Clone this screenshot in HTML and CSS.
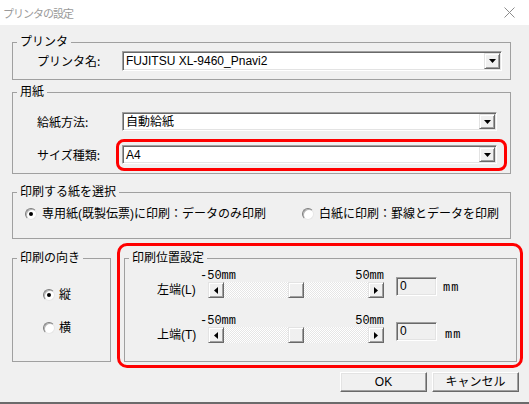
FILE: index.html
```html
<!doctype html>
<html>
<head>
	<meta charset="utf-8" />
	<title>プリンタの設定</title>
	<link rel="stylesheet" href="styles.css">
</head>
<body>
	<div class="titlebar">
		<span class="title">プリンタの設定</span>
		<svg class="close" width="11" height="11" viewBox="0 0 11 11">
			<path d="M0.5 0.5L10.5 10.5M10.5 0.5L0.5 10.5" stroke="#8c8c8c" stroke-width="1" fill="none"/>
		</svg>
	</div>

	<div class="dialog">
		<fieldset class="group g-printer">
			<legend>プリンタ</legend>
			<div class="row">
				<span class="row-label">プリンタ名:</span>
				<div class="combo combo-wide">
					<span class="combo-text">FUJITSU XL-9460_Pnavi2</span>
					<span class="drop"><svg width="7" height="4" viewBox="0 0 7 4"><path d="M0 0H7L3.5 4Z" fill="#000"/></svg></span>
				</div>
			</div>
		</fieldset>

		<fieldset class="group g-paper">
			<legend>用紙</legend>
			<div class="row">
				<span class="row-label">給紙方法:</span>
				<div class="combo">
					<span class="combo-text">自動給紙</span>
					<span class="drop"><svg width="7" height="4" viewBox="0 0 7 4"><path d="M0 0H7L3.5 4Z" fill="#000"/></svg></span>
				</div>
			</div>
			<div class="row row-size">
				<span class="row-label">サイズ種類:</span>
				<div class="mark mark-size">
					<div class="combo">
						<span class="combo-text">A4</span>
						<span class="drop"><svg width="7" height="4" viewBox="0 0 7 4"><path d="M0 0H7L3.5 4Z" fill="#000"/></svg></span>
					</div>
				</div>
			</div>
		</fieldset>

		<fieldset class="group g-select">
			<legend>印刷する紙を選択</legend>
			<div class="options">
				<label class="opt"><span class="radio checked"></span>専用紙(既製伝票)に印刷：データのみ印刷</label>
				<label class="opt opt-blank"><span class="radio"></span>白紙に印刷：罫線とデータを印刷</label>
			</div>
		</fieldset>

		<div class="lower">
			<fieldset class="group g-orient">
				<legend>印刷の向き</legend>
				<div class="orient-list">
					<label class="opt"><span class="radio checked"></span>縦</label>
					<label class="opt opt-landscape"><span class="radio"></span>横</label>
				</div>
			</fieldset>

			<div class="mark mark-pos">
				<fieldset class="group g-pos">
					<legend>印刷位置設定</legend>
					<div class="slider">
						<span class="slider-label">左端(L)</span>
						<div class="track-col">
							<div class="scale"><span>-50mm</span><span>50mm</span></div>
							<div class="scroll">
								<span class="sb-btn"><svg width="4" height="7" viewBox="0 0 4 7"><path d="M4 0V7L0 3.5Z" fill="#000"/></svg></span>
								<span class="sb-track"><span class="sb-thumb"></span></span>
								<span class="sb-btn"><svg width="4" height="7" viewBox="0 0 4 7"><path d="M0 0V7L4 3.5Z" fill="#000"/></svg></span>
							</div>
						</div>
						<span class="edit">0</span>
						<span class="unit">mm</span>
					</div>
					<div class="slider">
						<span class="slider-label">上端(T)</span>
						<div class="track-col">
							<div class="scale"><span>-50mm</span><span>50mm</span></div>
							<div class="scroll">
								<span class="sb-btn"><svg width="4" height="7" viewBox="0 0 4 7"><path d="M4 0V7L0 3.5Z" fill="#000"/></svg></span>
								<span class="sb-track"><span class="sb-thumb"></span></span>
								<span class="sb-btn"><svg width="4" height="7" viewBox="0 0 4 7"><path d="M0 0V7L4 3.5Z" fill="#000"/></svg></span>
							</div>
						</div>
						<span class="edit">0</span>
						<span class="unit unit-low">mm</span>
					</div>
				</fieldset>
			</div>
		</div>

		<div class="buttons">
			<button class="btn">OK</button>
			<button class="btn">キャンセル</button>
		</div>
	</div>
</body>
</html>
```

FILE: styles.css
```css
*
{
	box-sizing: border-box;
}

body
{
	margin: 0;
	width: 529px;
	height: 404px;
	overflow: hidden;
	background: #f0f0f0;
	border-bottom: 2px solid #6b6b6b;
	color: #000;
	font-family: "Liberation Sans", "Noto Sans CJK JP", sans-serif;
	font-size: 12px;
	line-height: 14px;
}

/* window caption */
.titlebar
{
	height: 25px;
	background: #fff;
	display: flex;
	align-items: center;
	justify-content: space-between;
	padding: 0 14px 0 3px;
}

.title
{
	font-family: "Noto Sans CJK JP", sans-serif;
	font-size: 11px;
	letter-spacing: -1px;
	color: #9a9a9a;
}

.close
{
	display: block;
}

.dialog
{
	padding: 10px 0 0 12px;
}

/* group boxes */
.group
{
	margin: 0;
	padding: 0;
	min-width: 0;
	border: 1px solid #a0a0a0;
	width: 499px;
}

.group legend
{
	margin-left: 4px;
	padding: 0 3px;
	line-height: 14px;
	height: 14px;
	white-space: nowrap;
}

.g-printer
{
	padding: 2px 0 8px 0;
}

.g-paper
{
	margin-top: 5px;
	padding: 13px 0 9px 0;
}

.g-select
{
	margin-top: 11px;
	padding: 8px 0 17px 0;
}

.row
{
	display: flex;
	align-items: center;
}

.row-size
{
	margin-top: 14px;
}

.row-label
{
	width: 109px;
	padding-left: 24px;
	font-family: "Noto Sans CJK JP", sans-serif;
}

/* combo boxes */
.combo
{
	display: flex;
	align-items: center;
	justify-content: space-between;
	width: 375px;
	height: 19px;
	background: #fff;
	border: 1px solid;
	border-color: #a0a0a0 #fff #fff #a0a0a0;
	box-shadow: inset 1px 1px #696969, inset -1px -1px #e3e3e3;
	padding: 0 1px 0 3px;
}

.combo-wide
{
	width: 380px;
	height: 20px;
}

.drop, .sb-btn
{
	display: flex;
	align-items: center;
	justify-content: center;
	width: 16px;
	height: 15px;
	background: #f0f0f0;
	border: 1px solid;
	border-color: #e3e3e3 #696969 #696969 #e3e3e3;
	box-shadow: inset 1px 1px #fff, inset -1px -1px #a0a0a0;
}

.combo-wide .drop
{
	height: 16px;
}

/* red annotation frames */
.mark
{
	position: relative;
}

.mark::after
{
	content: "";
	position: absolute;
	border: 3px solid #f00;
	border-radius: 8px;
}

.mark-size::after
{
	top: -6px;
	left: -6px;
	right: -10px;
	bottom: -7px;
}

.mark-pos::after
{
	top: -8px;
	left: -7px;
	right: -6px;
	bottom: -6px;
	border-radius: 10px;
}

/* radio buttons */
.options
{
	display: flex;
	padding-left: 12px;
}

.opt
{
	display: flex;
	align-items: center;
	height: 14px;
}

.opt-blank
{
	margin-left: 36px;
}

.radio
{
	position: relative;
	width: 12px;
	height: 12px;
	margin-right: 5px;
	border-radius: 50%;
	background: #fff;
	border: 1px solid;
	border-color: #7d7d7d #e6e6e6 #e6e6e6 #7d7d7d;
	box-shadow: inset 1px 1px #b4b4b4;
}

.radio.checked::after
{
	content: "";
	position: absolute;
	left: 3px;
	top: 3px;
	width: 4px;
	height: 4px;
	border-radius: 50%;
	background: #000;
}

/* lower part */
.lower
{
	display: flex;
	margin-top: 12px;
}

.g-orient
{
	width: 99px;
	height: 111px;
}

.orient-list
{
	padding: 23px 0 0 30px;
}

.orient-list .radio
{
	margin-right: 4px;
}

.opt-landscape
{
	margin-top: 19px;
}

.mark-pos
{
	margin-left: 13px;
}

.g-pos
{
	width: 393px;
	height: 111px;
	padding-top: 5px;
}

.slider
{
	display: flex;
	align-items: flex-start;
	height: 45px;
}

.slider-label
{
	width: 43px;
	margin-left: 32px;
	padding-top: 13px;
}

.track-col
{
	width: 184px;
}

.scale
{
	display: flex;
	justify-content: space-between;
	height: 12px;
	line-height: 12px;
	font-family: "Liberation Mono", monospace;
}

.scroll
{
	display: flex;
	width: 176px;
	height: 16px;
	margin-left: 8px;
}

.sb-btn
{
	height: 16px;
}

.sb-track
{
	flex: 1;
	background: repeating-conic-gradient(#fff 0 25%, #e6e6e6 0 50%) 0 0 / 2px 2px;
}

.sb-thumb
{
	display: block;
	width: 16px;
	height: 16px;
	margin-left: 64px;
	background: #f0f0f0;
	border: 1px solid;
	border-color: #e3e3e3 #696969 #696969 #e3e3e3;
	box-shadow: inset 1px 1px #fff, inset -1px -1px #a0a0a0;
}

.edit
{
	width: 41px;
	height: 19px;
	margin: 7px 0 0 12px;
	padding: 1px 0 0 3px;
	background: #f0f0f0;
	border: 1px solid;
	border-color: #a0a0a0 #fff #fff #a0a0a0;
	box-shadow: inset 1px 1px #696969, inset -1px -1px #e3e3e3;
}

.unit
{
	margin-left: 6px;
	padding-top: 11px;
	font-family: "Liberation Mono", monospace;
	letter-spacing: 1px;
}

.unit-low
{
	margin-left: 8px;
	padding-top: 13px;
}

/* dialog buttons */
.buttons
{
	display: flex;
	justify-content: flex-end;
	gap: 5px;
	margin-top: 10px;
	padding-right: 10px;
}

.btn
{
	width: 87px;
	height: 20px;
	padding: 0;
	font: inherit;
	color: #000;
	background: #f0f0f0;
	border: 1px solid;
	border-color: #fff #696969 #696969 #fff;
	box-shadow: inset -1px -1px #a0a0a0, inset 1px 1px #e3e3e3;
}
```
